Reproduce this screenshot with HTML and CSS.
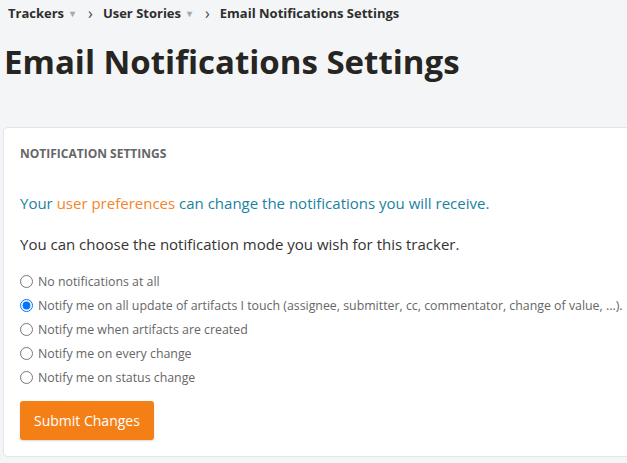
FILE: index.html
```html
<!DOCTYPE html>
<html lang="en">
<head>
<meta charset="utf-8">
<title>Email Notifications Settings</title>
<link rel="stylesheet" href="styles.css">
</head>
<body>
<nav class="breadcrumb">
  <span class="crumb">Trackers</span><span class="caret">▾</span>
  <span class="sep">›</span>
  <span class="crumb">User Stories</span><span class="caret">▾</span>
  <span class="sep">›</span>
  <span class="crumb">Email Notifications Settings</span>
</nav>
<h1 class="title">Email Notifications Settings</h1>
<section class="card">
  <h2 class="card-title">Notification settings</h2>
  <div class="card-body">
    <p class="info">Your <a href="#" class="link">user preferences</a> can change the notifications you will receive.</p>
    <p class="lead">You can choose the notification mode you wish for this tracker.</p>
    <form class="options">
      <label class="option"><input type="radio" name="mode"> No notifications at all</label>
      <label class="option"><input type="radio" name="mode" checked> Notify me on all update of artifacts I touch (assignee, submitter, cc, commentator, change of value, ...).</label>
      <label class="option"><input type="radio" name="mode"> Notify me when artifacts are created</label>
      <label class="option"><input type="radio" name="mode"> Notify me on every change</label>
      <label class="option"><input type="radio" name="mode"> Notify me on status change</label>
      <button type="button" class="btn">Submit Changes</button>
    </form>
  </div>
</section>
</body>
</html>
```

FILE: styles.css
```css
html, body {
  margin: 0;
  padding: 0;
}
body {
  background: #f4f5f7;
  font-family: "Open Sans", sans-serif;
  color: #333;
  overflow: hidden;
}
.breadcrumb {
  display: flex;
  align-items: center;
  padding: 3px 8px 0;
  height: 20px;
  font-size: 13px;
  font-weight: 700;
  color: #2e2e2e;
}
.caret {
  font-size: 10px;
  color: #aaa;
  margin-left: 6px;
}
.sep {
  font-weight: 400;
  font-size: 16px;
  color: #444;
  margin: 0 10px 0 13px;
}
.title {
  margin: 16px 0 0 4px;
  font-size: 33px;
  line-height: 46px;
  font-weight: 700;
  color: #262521;
  white-space: nowrap;
}
.card {
  margin: 42px 0 0 3px;
  width: 700px;
  background: #fff;
  border: 1px solid #e3e5ec;
  border-radius: 5px;
  padding-bottom: 16px;
}
.card-title {
  margin: 0;
  padding: 18px 16px 0;
  font-size: 12px;
  line-height: 16px;
  font-weight: 700;
  text-transform: uppercase;
  color: #666;
}
.card-body {
  padding: 0 16px;
}
.info {
  margin: 30px 0 0;
  font-size: 15px;
  line-height: 22px;
  color: #1a82a0;
}
.link {
  color: #f5842a;
  text-decoration: none;
}
.lead {
  margin: 19px 0 0;
  font-size: 15px;
  line-height: 22px;
  color: #333;
}
.options {
  display: flex;
  flex-direction: column;
  align-items: flex-start;
  margin-top: 14px;
}
.option {
  display: flex;
  align-items: center;
  height: 24px;
  font-size: 12.35px;
  color: #666;
  white-space: nowrap;
}
.option input {
  margin: 0 5px 0 0;
  width: 13px;
  height: 13px;
}
.btn {
  margin-top: 12px;
  height: 39px;
  padding: 0 14px;
  border: 0;
  border-radius: 3px;
  background: #f57f17;
  color: #fff;
  font-family: inherit;
  font-size: 14px;
  box-shadow: 0 1px 2px rgba(0,0,0,0.15);
}
```
